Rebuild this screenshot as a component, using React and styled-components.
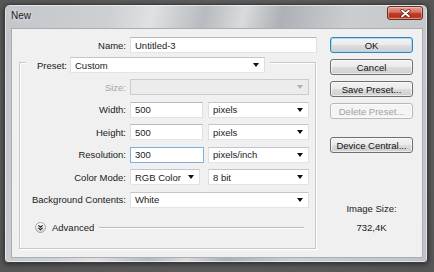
import React from 'react';
import styled, { createGlobalStyle } from 'styled-components';

const Global = createGlobalStyle`
  html, body { margin: 0; padding: 0; background: #5a5a5a; }
  body {
    width: 434px; height: 272px; overflow: hidden;
    font-family: "Liberation Sans", Arial, sans-serif;
    -webkit-font-smoothing: antialiased;
  }
  * { box-sizing: border-box; }
`;

const Stage = styled.div`
  width: 434px;
  height: 272px;
  padding: 4px 6px 0 4px;
  background: radial-gradient(ellipse at 50% 45%, #6a6a6a 0%, #5a5a5a 70%, #555 100%);
`;

const Window = styled.div`
  width: 424px;
  height: 259px;
  display: flex;
  flex-direction: column;
  border: 1px solid #3b3d40;
  border-radius: 6px 6px 4px 4px;
  background: linear-gradient(103deg, #c2c6ca 0%, #cdd0d3 22%, #dfe1e3 31%, #b7bbbf 42%, #d9dbdd 50%, #adb1b5 58%, #cbced1 72%, #bfc3c7 100%);
  box-shadow: inset 0 0 0 1px rgba(255,255,255,0.55), 0 1px 5px rgba(0,0,0,0.55);
`;

const TitleBar = styled.div`
  height: 23px;
  flex: none;
  display: flex;
  justify-content: space-between;
  align-items: flex-start;
  padding: 0 4px 0 6px;
`;

const Title = styled.div`
  margin-top: 5px;
  font-size: 10px;
  line-height: 12px;
  color: #1c1c1c;
  text-shadow: 0 0 6px rgba(255,255,255,0.9);
`;

const CloseButton = styled.div`
  margin-top: 1px;
  width: 36px;
  height: 14px;
  border: 1px solid #6d2a22;
  border-radius: 3px;
  background: linear-gradient(#e4a195 0%, #d4705f 45%, #c0402b 50%, #b8321d 80%, #cf5a3e 100%);
  display: flex;
  align-items: center;
  justify-content: center;
  box-shadow: inset 0 0 0 1px rgba(255,255,255,0.35);
`;

const Client = styled.div`
  flex: 1;
  margin: 0 4px 4px 6px;
  border: 1px solid #a9aeb3;
  background: #f0f0f0;
  display: flex;
  gap: 13px;
  padding: 8px 0 0 7px;
  font-size: 9.5px;
  color: #1a1a1a;
`;

const LeftPane = styled.div`
  width: 298px;
  display: flex;
  flex-direction: column;
`;

const Row = styled.div`
  display: flex;
  align-items: center;
  height: 16px;
  gap: ${p => p.$gap ?? 5}px;
`;

const Label = styled.div`
  width: ${p => p.$w}px;
  flex: none;
  text-align: right;
  margin-right: ${p => p.$mr ?? -1}px;
  color: ${p => (p.$disabled ? '#a6a6a6' : '#1a1a1a')};
  white-space: nowrap;
`;

const TextBox = styled.div`
  width: ${p => p.$w}px;
  height: 16px;
  flex: none;
  background: #fff;
  border: 1px solid;
  border-color: ${p => (p.$focus ? '#7fb0df' : '#b6bac0 #dcdfe3 #e2e5e8 #dcdfe3')};
  padding: 0 4px;
  display: flex;
  align-items: center;
  white-space: nowrap;
`;

const Select = styled.div`
  width: ${p => p.$w}px;
  height: 16px;
  flex: none;
  background: ${p => (p.$disabled ? '#ececec' : '#fff')};
  border: 1px solid;
  border-color: ${p => (p.$disabled ? '#c9cbce' : '#c2c5c9 #dcdfe3 #e2e5e8 #dcdfe3')};
  padding: 0 4px 0 4px;
  display: flex;
  align-items: center;
  justify-content: space-between;
  white-space: nowrap;
`;

const Caret = styled.span`
  width: 0;
  height: 0;
  margin-right: 1px;
  border-left: 3px solid transparent;
  border-right: 3px solid transparent;
  border-top: 4px solid ${p => (p.$disabled ? '#b0b0b0' : '#111')};
`;

const GroupBox = styled.div`
  margin-top: 9px;
  width: 297px;
  border: 1px solid #c6c9cc;
  box-shadow: inset 1px 1px 0 #fff, 1px 1px 0 #fff;
  display: flex;
  flex-direction: column;
  padding-bottom: 14px;
`;

const GroupHeader = styled.div`
  align-self: flex-start;
  margin: -6px 0 0 6px;
  padding-right: 5px;
  background: #f0f0f0;
  display: flex;
  align-items: center;
  height: 16px;
  gap: 3px;
`;

const Rows = styled.div`
  margin-top: 6px;
  display: flex;
  flex-direction: column;
  gap: 6.6px;
`;

const AdvancedRow = styled.div`
  margin-top: 14px;
  height: 12px;
  display: flex;
  align-items: center;
  padding: 0 11px 0 15px;
`;

const AdvancedText = styled.span`
  margin-left: 6px;
`;

const Rule = styled.div`
  flex: 1;
  margin-left: 5px;
  height: 1px;
  background: #b9bcbf;
  box-shadow: 0 1px 0 #fff;
`;

const RightPane = styled.div`
  width: 83px;
  display: flex;
  flex-direction: column;
  align-items: stretch;
`;

const Button = styled.div`
  height: 16px;
  margin-top: ${p => p.$mt ?? 6}px;
  border: 1px solid ${p => (p.$default ? '#3c7fb1' : p.$disabled ? '#b7babd' : '#707070')};
  border-radius: 3px;
  background: ${p =>
    p.$disabled
      ? '#f4f4f4'
      : 'linear-gradient(#f2f2f2 0%, #ebebeb 50%, #dddddd 50%, #cfcfcf 100%)'};
  box-shadow: ${p => (p.$default ? 'inset 0 0 0 1px #9fdcf7' : 'inset 0 0 0 1px rgba(255,255,255,0.6)')};
  color: ${p => (p.$disabled ? '#a3a3a3' : '#111')};
  display: flex;
  align-items: center;
  justify-content: center;
  white-space: nowrap;
`;

const Info = styled.div`
  margin-top: ${p => p.$mt}px;
  line-height: 12px;
  text-align: center;
`;

const AdvancedIcon = () => (
  <svg width="11" height="11" viewBox="0 0 11 11">
    <defs>
      <linearGradient id="adv" x1="0" y1="0" x2="0" y2="1">
        <stop offset="0" stopColor="#ffffff" />
        <stop offset="1" stopColor="#d6d6d6" />
      </linearGradient>
    </defs>
    <circle cx="5.5" cy="5.5" r="5" fill="url(#adv)" stroke="#a3a3a3" strokeWidth="1" />
    <path d="M3.4 3.4 L5.5 5.2 L7.6 3.4 M3.4 5.9 L5.5 7.7 L7.6 5.9" fill="none" stroke="#222" strokeWidth="1.2" />
  </svg>
);

const CloseX = () => (
  <svg width="11" height="9" viewBox="0 0 11 9">
    <path d="M2 1.5 L9 7.5 M9 1.5 L2 7.5" stroke="#5a1a12" strokeWidth="3.2" strokeLinecap="round" />
    <path d="M2 1.5 L9 7.5 M9 1.5 L2 7.5" stroke="#fff" strokeWidth="1.8" strokeLinecap="round" />
  </svg>
);

const LBL = 106;

export default function App() {
  return (
    <>
      <Global />
      <Stage>
        <Window>
          <TitleBar>
            <Title>New</Title>
            <CloseButton>
              <CloseX />
            </CloseButton>
          </TitleBar>
          <Client>
            <LeftPane>
              <Row $gap={4}>
                <Label $w={107} $mr={0}>Name:</Label>
                <TextBox $w={187}>Untitled-3</TextBox>
              </Row>
              <GroupBox>
                <GroupHeader>
                  <Label $w={41} $mr={0}>Preset:</Label>
                  <Select $w={195}>
                    <span>Custom</span>
                    <Caret />
                  </Select>
                </GroupHeader>
                <Rows>
                  <Row $gap={4}>
                    <Label $w={LBL} $mr={0} $disabled>Size:</Label>
                    <Select $w={179} $disabled>
                      <span />
                      <Caret $disabled />
                    </Select>
                  </Row>
                  <Row $gap={4}>
                    <Label $w={LBL} $mr={0}>Width:</Label>
                    <TextBox $w={73}>500</TextBox>
                    <Select $w={101} style={{ marginLeft: 1 }}>
                      <span>pixels</span>
                      <Caret />
                    </Select>
                  </Row>
                  <Row $gap={4}>
                    <Label $w={LBL} $mr={0}>Height:</Label>
                    <TextBox $w={73}>500</TextBox>
                    <Select $w={101} style={{ marginLeft: 1 }}>
                      <span>pixels</span>
                      <Caret />
                    </Select>
                  </Row>
                  <Row $gap={4}>
                    <Label $w={LBL} $mr={0}>Resolution:</Label>
                    <TextBox $w={74} $focus>300</TextBox>
                    <Select $w={101}>
                      <span>pixels/inch</span>
                      <Caret />
                    </Select>
                  </Row>
                  <Row $gap={4}>
                    <Label $w={LBL} $mr={0}>Color Mode:</Label>
                    <Select $w={70}>
                      <span>RGB Color</span>
                      <Caret />
                    </Select>
                    <Select $w={101} style={{ marginLeft: 4 }}>
                      <span>8 bit</span>
                      <Caret />
                    </Select>
                  </Row>
                  <Row $gap={4}>
                    <Label $w={LBL} $mr={0}>Background Contents:</Label>
                    <Select $w={179}>
                      <span>White</span>
                      <Caret />
                    </Select>
                  </Row>
                </Rows>
                <AdvancedRow>
                  <AdvancedIcon />
                  <AdvancedText>Advanced</AdvancedText>
                  <Rule />
                </AdvancedRow>
              </GroupBox>
            </LeftPane>
            <RightPane>
              <Button $default $mt={0}>OK</Button>
              <Button>Cancel</Button>
              <Button>Save Preset...</Button>
              <Button $disabled>Delete Preset...</Button>
              <Button $mt={18}>Device Central...</Button>
              <Info $mt={50}>Image Size:</Info>
              <Info $mt={7}>732,4K</Info>
            </RightPane>
          </Client>
        </Window>
      </Stage>
    </>
  );
}
